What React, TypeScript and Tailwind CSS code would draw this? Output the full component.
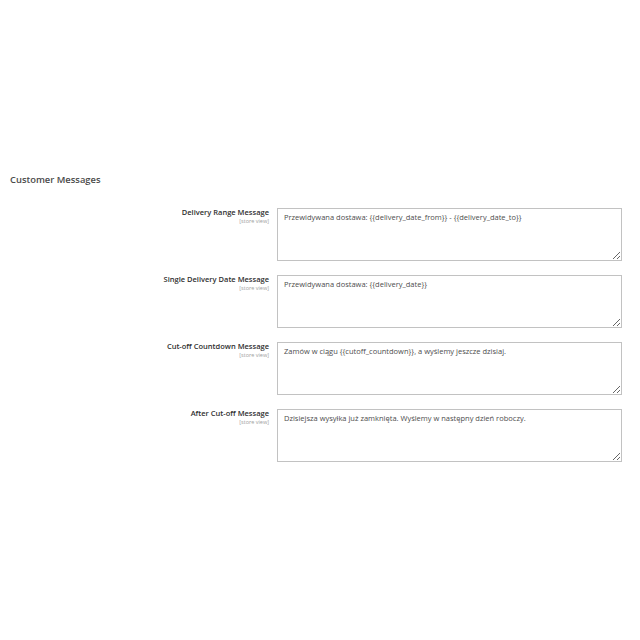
const fields = [
  {
    label: 'Delivery Range Message',
    value: 'Przewidywana dostawa: {{delivery_date_from}} - {{delivery_date_to}}',
  },
  {
    label: 'Single Delivery Date Message',
    value: 'Przewidywana dostawa: {{delivery_date}}',
  },
  {
    label: 'Cut-off Countdown Message',
    value: 'Zamów w ciągu {{cutoff_countdown}}, a wyślemy jeszcze dzisiaj.',
  },
  {
    label: 'After Cut-off Message',
    value: 'Dzisiejsza wysyłka już zamknięta. Wyślemy w następny dzień roboczy.',
  },
]

export default function App() {
  return (
    <div className="min-h-[640px] bg-white pt-[173px] pl-[10px] pr-[18px] font-['Open_Sans',sans-serif]">
      <h2 className="text-[9.4px] leading-[14px] font-semibold text-[#4a4a4a]">Customer Messages</h2>
      <div className="mt-[21px] flex flex-col gap-[14px]">
        {fields.map((f) => (
          <div key={f.label} className="flex gap-[8px]">
            <div className="w-[259px] shrink-0 text-right -mt-[1px]">
              <div className="text-[7.5px] leading-[11px] font-semibold text-[#303030]">{f.label}</div>
              <div className="text-[5.5px] leading-[6px] text-[#a0a0a0]">[store view]</div>
            </div>
            <textarea
              readOnly
              defaultValue={f.value}
              className="h-[53px] flex-1 border border-[#c2c2c2] px-[6px] py-[3px] text-[7.5px] leading-[11px] text-[#4d4d4d] outline-none resize-y"
            />
          </div>
        ))}
      </div>
    </div>
  )
}
